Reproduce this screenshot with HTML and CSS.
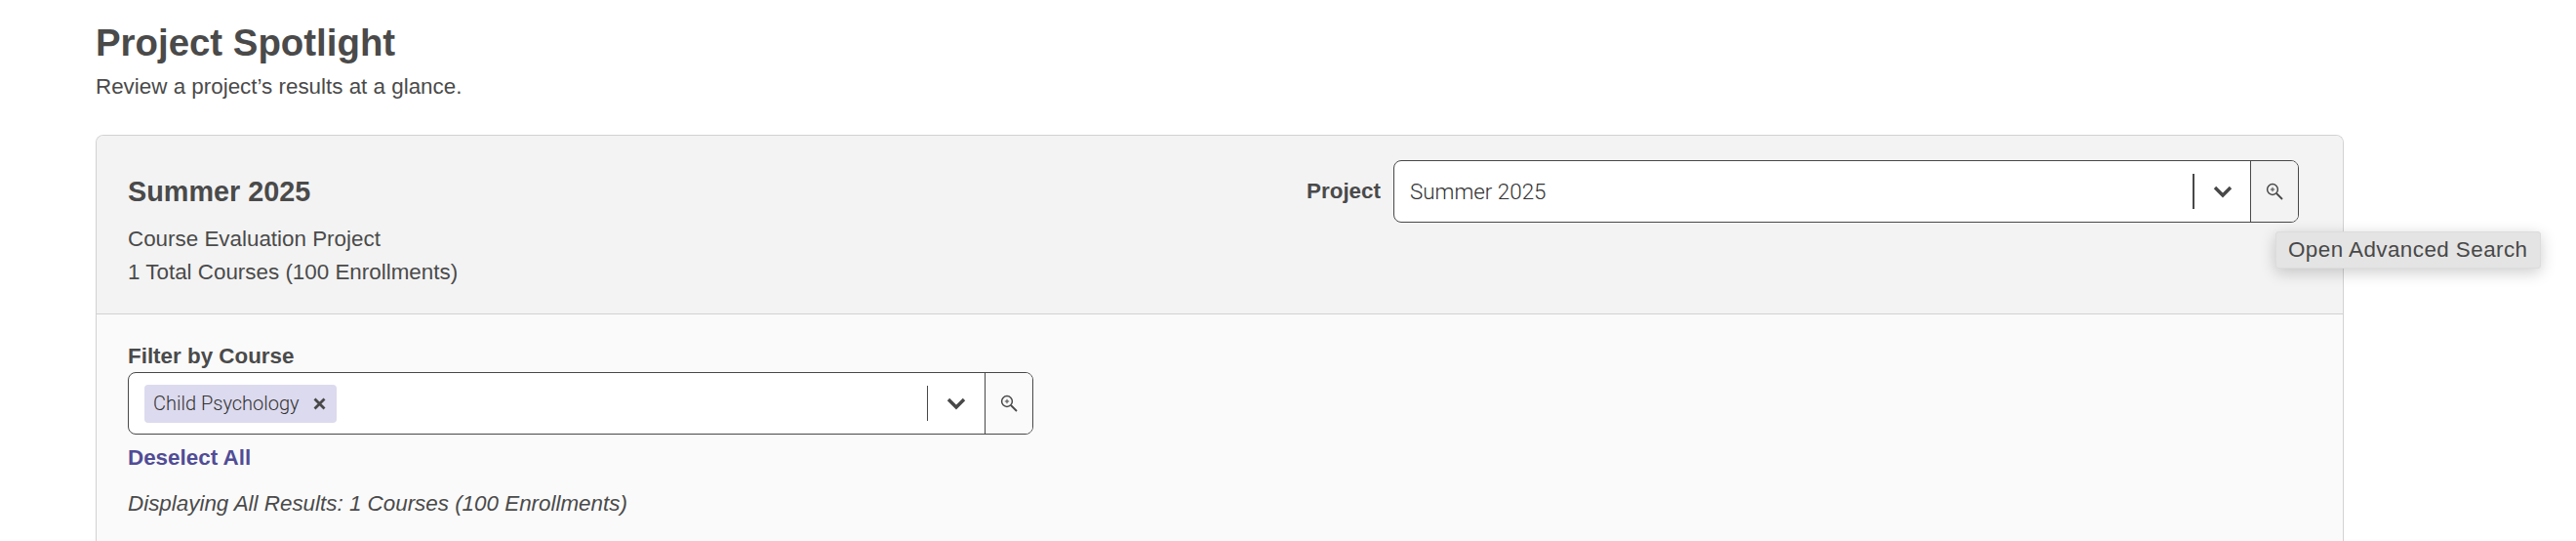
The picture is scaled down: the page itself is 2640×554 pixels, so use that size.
FILE: index.html
```html
<!DOCTYPE html>
<html lang="en">
<head>
<meta charset="utf-8">
<title>Project Spotlight</title>
<link rel="stylesheet" href="styles.css">
</head>
<body>
<main class="page">
  <h1 class="title">Project Spotlight</h1>
  <p class="subtitle">Review a project’s results at a glance.</p>
  <section class="card">
    <header class="card-head">
      <div class="summary">
        <h2 class="summary-title">Summer 2025</h2>
        <p class="summary-line">Course Evaluation Project</p>
        <p class="summary-line">1 Total Courses (100 Enrollments)</p>
      </div>
      <div class="project-field">
        <label class="project-label">Project</label>
        <div class="select select-project">
          <div class="select-value"><span class="value-text">Summer 2025</span></div>
          <span class="sep sep-thick"></span>
          <span class="chev"><svg width="20" height="14" viewBox="0 0 20 14"><path d="M2 3l8 8 8-8" fill="none" stroke="#484848" stroke-width="3.4"/></svg></span>
          <button class="search-btn"><svg width="18" height="18" viewBox="0 0 18 18"><circle cx="7" cy="7" r="5.4" fill="none" stroke="#484848" stroke-width="1.5"/><path d="M11 11l6 6" stroke="#484848" stroke-width="1.8"/><path d="M4.8 7h4.4M7 4.8v4.4" stroke="#484848" stroke-width="1"/></svg></button>
          <div class="tooltip">Open Advanced Search</div>
        </div>
      </div>
    </header>
    <div class="card-body">
      <label class="filter-label">Filter by Course</label>
      <div class="select select-filter">
        <div class="select-value">
          <span class="chip"><span class="chip-text">Child Psychology</span><svg class="chip-x" width="13" height="13" viewBox="0 0 13 13"><path d="M1.5 1.5l10 10M11.5 1.5l-10 10" stroke="#484848" stroke-width="2.8"/></svg></span>
        </div>
        <span class="sep"></span>
        <span class="chev"><svg width="20" height="14" viewBox="0 0 20 14"><path d="M2 3l8 8 8-8" fill="none" stroke="#484848" stroke-width="3.4"/></svg></span>
        <button class="search-btn"><svg width="18" height="18" viewBox="0 0 18 18"><circle cx="7" cy="7" r="5.4" fill="none" stroke="#484848" stroke-width="1.5"/><path d="M11 11l6 6" stroke="#484848" stroke-width="1.8"/><path d="M4.8 7h4.4M7 4.8v4.4" stroke="#484848" stroke-width="1"/></svg></button>
      </div>
      <a class="deselect" href="#">Deselect All</a>
      <p class="displaying">Displaying All Results: 1 Courses (100 Enrollments)</p>
    </div>
  </section>
</main>
</body>
</html>
```
FILE: styles.css
```css
html, body {
  margin: 0;
  height: 554px;
  overflow: hidden;
  background: #fff;
}
body {
  font-family: "Liberation Sans", Arial, sans-serif;
  color: #4a4a4a;
}
.page {
  padding: 21px 238px 0 98px;
}
.title {
  margin: 0;
  font-size: 38.4px;
  line-height: 46px;
  font-weight: 700;
}
.subtitle {
  margin: 7px 0 0;
  font-size: 22.4px;
  line-height: 30px;
}
.card {
  margin-top: 34px;
  border: 1px solid #d2d2d2;
  border-bottom: 0;
  border-radius: 8px 8px 0 0;
  background: #fafafa;
  height: 500px;
}
.card-head {
  display: flex;
  justify-content: space-between;
  align-items: flex-start;
  height: 183px;
  box-sizing: border-box;
  padding: 25px 45px 0 32px;
  background: #f3f3f3;
  border-bottom: 1px solid #d2d2d2;
  border-radius: 7px 7px 0 0;
}
.summary-title {
  margin: 14px 0 0;
  font-size: 28.8px;
  line-height: 36px;
  font-weight: 700;
}
.summary-line {
  margin: 0;
  font-size: 22.4px;
  line-height: 34px;
}
.summary-title + .summary-line {
  margin-top: 14px;
}
.project-field {
  display: flex;
  align-items: center;
  gap: 13px;
}
.project-label {
  font-size: 22.4px;
  font-weight: 700;
}
.select {
  position: relative;
  display: flex;
  align-items: center;
  box-sizing: border-box;
  width: 928px;
  height: 64px;
  border: 1px solid #484848;
  border-radius: 8px;
  background: #fff;
}
.select-value {
  flex: 1;
  display: flex;
  align-items: center;
  padding-left: 16px;
  min-width: 0;
}
.value-text {
  font-family: Roboto, "Liberation Sans", sans-serif;
  font-weight: 300;
  font-size: 22.4px;
  color: #333;
}
.sep {
  width: 1px;
  height: 36px;
  background: #484848;
}
.sep-thick {
  width: 2px;
}
.chev {
  display: flex;
  justify-content: center;
  width: 58px;
}
.select-project .chev {
  width: 57px;
}
.search-btn {
  display: flex;
  align-items: center;
  justify-content: center;
  box-sizing: border-box;
  width: 49px;
  height: 100%;
  padding: 0;
  border: 0;
  border-left: 1px solid #484848;
  border-radius: 0 7px 7px 0;
  background: #f3f3f3;
}
.select-filter .search-btn {
  background: #fafafa;
}
.chip {
  display: flex;
  align-items: center;
  height: 39px;
  padding: 0 11px 0 9px;
  border-radius: 4px;
  background: #dcdaee;
}
.chip-text {
  font-family: Roboto, "Liberation Sans", sans-serif;
  font-weight: 300;
  font-size: 20px;
  color: #333;
}
.chip-x {
  margin-left: 14px;
}
.tooltip {
  position: absolute;
  top: 72px;
  left: 903px;
  box-sizing: border-box;
  height: 38px;
  padding: 0 12px;
  display: flex;
  align-items: center;
  white-space: nowrap;
  font-size: 22.4px;
  letter-spacing: 0.45px;
  color: #484848;
  background: #e4e4e4;
  border: 1px solid #dcdcdc;
  border-radius: 3px;
  box-shadow: 0 4px 16px rgba(0, 0, 0, 0.2);
}
.card-body {
  padding: 28px 32px 0;
}
.filter-label {
  display: block;
  font-size: 22.4px;
  line-height: 30px;
  font-weight: 700;
  margin-bottom: 1px;
}
.deselect {
  display: block;
  margin-top: 9px;
  font-size: 22.4px;
  line-height: 30px;
  font-weight: 700;
  color: #514c96;
  text-decoration: none;
}
.displaying {
  margin: 17px 0 0;
  font-size: 22.4px;
  line-height: 30px;
  font-style: italic;
}
```
